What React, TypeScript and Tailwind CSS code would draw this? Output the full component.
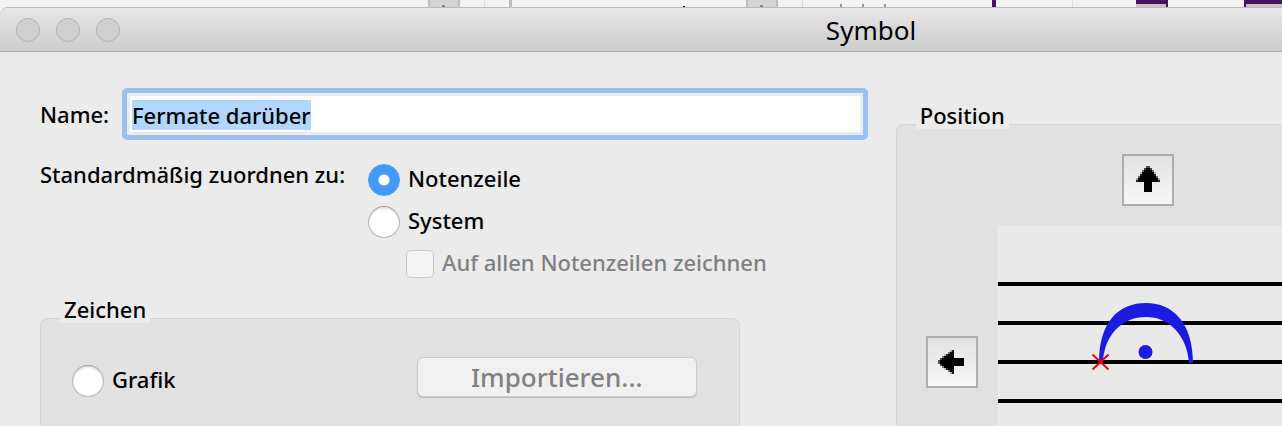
import { useEffect, useRef, useState } from 'react';
import type { ReactNode } from 'react';

const staffLines = [56, 95, 134, 173];

// Arrow head, one entry per 2px row: half width and how dark its soft edge is
const headRows = [
  { half: 0, edge: 0.65 },
  { half: 2, edge: 0.7 },
  { half: 4, edge: 0.5 },
  { half: 6, edge: 0.2 },
  { half: 6, edge: 0.85 },
  { half: 8, edge: 0.55 },
  { half: 10, edge: 0.3 },
  { half: 10, edge: 0.85 },
];

function ArrowIcon({ className = '' }: { className?: string }) {
  return (
    <svg viewBox="0 0 48 48" className={`size-12 ${className}`} shapeRendering="crispEdges" aria-hidden="true">
      {headRows.map(({ half, edge }, i) => (
        <g key={i}>
          <rect x={22 - half} y={10 + i * 2} width={2} height={2} opacity={edge} />
          <rect x={24 + half} y={10 + i * 2} width={2} height={2} opacity={edge} />
          <rect x={24 - half} y={10 + i * 2} width={half * 2} height={2} />
        </g>
      ))}
      <rect x={20} y={26} width={8} height={10} />
    </svg>
  );
}

function ArrowButton({ label, children, className = '' }: { label: string; children: ReactNode; className?: string }) {
  return (
    <button
      type="button"
      aria-label={label}
      className={`size-[52px] border-2 border-[#adadad] bg-linear-to-b from-[#e2e2e2] to-[#f7f7f7] ${className}`}
    >
      {children}
    </button>
  );
}

interface RadioProps {
  name: string;
  label: string;
  checked: boolean;
  onChange: () => void;
}

function Radio({ name, label, checked, onChange }: RadioProps) {
  return (
    <label className="flex h-8 items-center gap-2">
      <input
        type="radio"
        name={name}
        checked={checked}
        onChange={onChange}
        className="size-8 shrink-0 appearance-none rounded-full border border-[#b4b4b4] border-t-[#9c9c9c] bg-white shadow-[inset_0_2px_2px_#e2e2e2] checked:border-[#429bf9] checked:bg-[radial-gradient(circle,white_5px,#429bf9_6px)] checked:shadow-none"
      />
      <span className="pb-1">{label}</span>
    </label>
  );
}

function StaffPreview() {
  return (
    <svg viewBox="0 0 300 272" className="h-[272px] w-[300px] bg-[#e9e9e9]" role="img" aria-label="Fermate">
      {staffLines.map((y) => (
        <rect key={y} x={0} y={y} width={300} height={4} />
      ))}
      <path
        d="M101 137 C101 95 121 77 148 77 C175 77 195 97 195 137 L191 137 C189 109 171 91 148 91 C124 91 106 109 105 137 Z"
        fill="#1c1ce0"
      />
      <circle cx={147.5} cy={126} r={7} fill="#1c1ce0" />
      <path d="M94.500 128.500 L110.500 143.500 M110.500 128.500 L94.500 143.500" stroke="#f00" strokeWidth={2} />
    </svg>
  );
}

// Sliver of the score window that shows above the dialog
function BackgroundWindow() {
  return (
    <svg className="h-2 w-full shrink-0 bg-[#f3f3f3]" aria-hidden="true">
      <rect x={428} width={32} height={8} fill="#d4d4d4" />
      <rect x={428} width={2} height={8} fill="#bcbcbc" />
      <rect x={458} width={2} height={8} fill="#bcbcbc" />
      <rect x={442} y={5} width={3} height={2} fill="#888" />
      <rect x={484} width={1} height={8} fill="#ddd" />
      <rect x={509} width={3} height={8} fill="#bcbcbc" />
      <rect x={683} y={6} width={2} height={2} />
      <rect x={746} width={32} height={8} fill="#d4d4d4" />
      <rect x={746} width={2} height={8} fill="#bcbcbc" />
      <rect x={776} width={2} height={8} fill="#bcbcbc" />
      <rect x={760} y={5} width={3} height={2} fill="#888" />
      <rect x={802} width={1} height={8} fill="#ddd" />
      <rect x={840} y={4} width={2} height={4} fill="#a98bb3" />
      <rect x={862} y={4} width={2} height={4} fill="#a98bb3" />
      <rect x={884} y={4} width={2} height={4} fill="#a98bb3" />
      <rect x={992} width={4} height={8} fill="#45145a" />
      <rect x={1072} width={1} height={8} fill="#ddd" />
      <rect x={1136} y={4} width={32} height={4} fill="#c4c4c4" />
      <rect x={1136} width={32} height={4} fill="#45145a" />
      <rect x={1166} width={2} height={8} fill="#45145a" />
      <rect x={1244} y={4} width={38} height={4} fill="#c4c4c4" />
      <rect x={1244} width={38} height={4} fill="#45145a" />
      <rect x={1244} width={2} height={8} fill="#45145a" />
    </svg>
  );
}

export default function App() {
  const nameRef = useRef<HTMLInputElement>(null);
  const [name, setName] = useState('Fermate darüber');
  const [target, setTarget] = useState('staff');
  const [source, setSource] = useState('text');

  useEffect(() => {
    nameRef.current?.focus();
    nameRef.current?.select();
  }, []);

  return (
    <div className="flex h-screen flex-col overflow-hidden bg-[#f3f3f3] font-['Noto_Sans',sans-serif] text-[22px] leading-8 font-medium text-black">
      <BackgroundWindow />

      <main className="flex flex-1 flex-col rounded-tl-lg bg-[#ebebeb]">
        {/* Title bar */}
        <header className="flex h-11 shrink-0 items-center rounded-tl-lg border-b border-[#a9a9a9] bg-linear-to-b from-[#e8e6e8] to-[#cdcdcd] pl-4 shadow-[0_-1px_0_#bbb]">
          <div className="flex gap-4">
            {['Schließen', 'Minimieren', 'Vergrößern'].map((label) => (
              <button
                key={label}
                type="button"
                disabled
                aria-label={label}
                className="size-6 rounded-full border border-[#b0b0b0] bg-[#d0d0d0]"
              />
            ))}
          </div>
          <h1 className="flex-1 pl-[340px] text-center text-[26px] font-normal">Symbol</h1>
        </header>

        <form className="grid flex-1 grid-cols-[15fr_7fr] gap-7 pt-9 pl-10">
          <div className="flex flex-col">
            <div className="flex items-center">
              <label htmlFor="name" className="w-[82px] shrink-0">
                Name:
              </label>
              <input
                id="name"
                ref={nameRef}
                type="text"
                value={name}
                onChange={(e) => setName(e.target.value)}
                className="h-[52px] min-w-0 flex-1 rounded-[5px] border-5 border-[#98c2f2] bg-white px-[5px] pt-[2px] leading-[26px] shadow-[inset_0_0_0_3px_#ebebeb] outline-none selection:bg-[#b1d6ff] selection:text-black"
              />
            </div>

            <div role="radiogroup" aria-labelledby="target-label" className="mt-6 flex">
              <span id="target-label" className="-mt-[6px] w-[328px] shrink-0 whitespace-nowrap">
                Standardmäßig zuordnen zu:
              </span>
              <div className="flex flex-col gap-[10px]">
                <Radio name="target" label="Notenzeile" checked={target === 'staff'} onChange={() => setTarget('staff')} />
                <Radio name="target" label="System" checked={target === 'system'} onChange={() => setTarget('system')} />
                <label className="flex h-8 items-center gap-2 pl-[38px] text-[#808080]">
                  <input
                    type="checkbox"
                    disabled
                    className="size-7 shrink-0 appearance-none rounded-[5px] border border-[#c8c8c8] bg-[#f5f5f5]"
                  />
                  <span className="pb-1 whitespace-nowrap">Auf allen Notenzeilen zeichnen</span>
                </label>
              </div>
            </div>

            <fieldset className="mt-[38px] mr-32 flex flex-1 flex-col rounded-t-lg border border-b-0 border-[#d5d5d5] bg-[#e1e1e1]">
              <legend className="float-left -mt-6 ml-[19px] h-7 self-start bg-[#ebebeb] px-1 leading-7">Zeichen</legend>
              <div className="flex items-end justify-between pt-[34px] pr-[42px] pl-[31px]">
                <Radio name="source" label="Grafik" checked={source === 'graphic'} onChange={() => setSource('graphic')} />
                <button
                  type="button"
                  disabled
                  className="h-10 w-[280px] rounded-md border border-[#cacaca] bg-[#f0f0f0] text-[26px] leading-9 text-[#808080] shadow-[0_1px_1px_#bbb]"
                >
                  Importieren...
                </button>
              </div>
            </fieldset>
          </div>

          <fieldset className="mt-9 flex min-w-0 flex-col rounded-tl-lg border-t border-l border-[#d5d5d5] bg-[#e1e1e1]">
            <legend className="float-left -mt-6 ml-[19px] h-7 self-start bg-[#ebebeb] px-1 leading-7">Position</legend>
            <div className="grid grid-cols-[52px_300px] items-center gap-5 pt-[25px] pl-[29px]">
              <ArrowButton label="Nach oben" className="col-start-2 justify-self-center">
                <ArrowIcon />
              </ArrowButton>
              <ArrowButton label="Nach links" className="col-start-1">
                <ArrowIcon className="-rotate-90" />
              </ArrowButton>
              <StaffPreview />
            </div>
          </fieldset>
        </form>
      </main>
    </div>
  );
}
